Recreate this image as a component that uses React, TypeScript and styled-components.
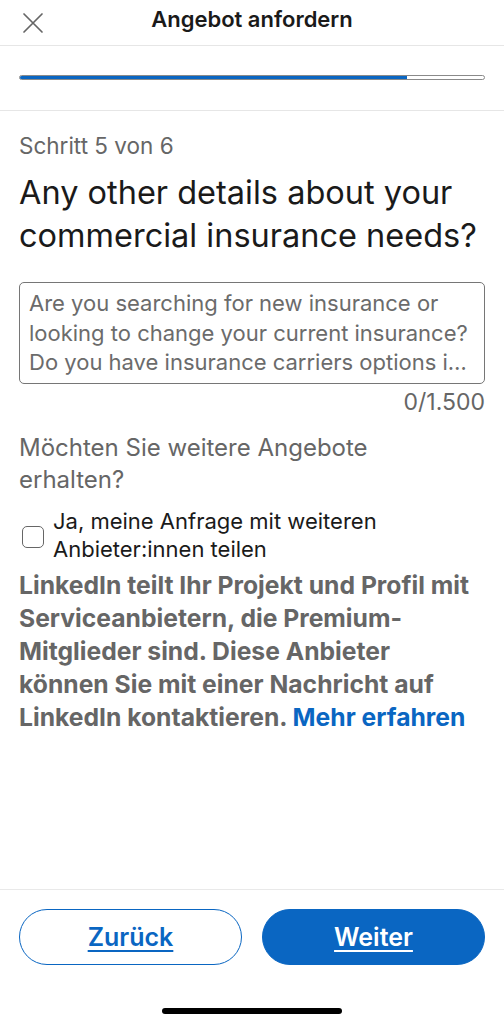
import React from "react";
import styled, { createGlobalStyle } from "styled-components";

const GlobalStyle = createGlobalStyle`
  html, body { margin: 0; padding: 0; background: #fff; }
  body { font-family: Inter, "Noto Sans", "Liberation Sans", sans-serif; -webkit-font-smoothing: antialiased; }
  * { box-sizing: border-box; }
`;

const Screen = styled.div`
  width: 504px;
  height: 1024px;
  display: flex;
  flex-direction: column;
  background: #fff;
`;

const Header = styled.header`
  height: 46px;
  display: grid;
  grid-template-columns: 64px 1fr 64px;
  align-items: center;
  border-bottom: 1px solid #e6e6e6;
`;

const CloseButton = styled.button`
  border: 0;
  background: none;
  padding: 0 0 0 22px;
  height: 100%;
  display: flex;
  align-items: center;
  color: #666;
`;

const Title = styled.h1`
  margin: 0;
  text-align: center;
  font-size: 22px;
  font-weight: 600;
  color: #1a1a1a;
  line-height: 36px;
  padding-bottom: 7px;
`;

const ProgressArea = styled.div`
  height: 65px;
  display: flex;
  align-items: center;
  padding: 0 19px 2px;
  border-bottom: 1px solid #e6e6e6;
`;

const Track = styled.div`
  flex: 1;
  height: 5px;
  border-radius: 3px;
  border: 1px solid #8a8a8a;
  background: #fff;
  overflow: hidden;
  display: flex;
`;

const Fill = styled.div`
  background: #0a66c2;
  height: 100%;
`;

const Content = styled.main`
  flex: 1;
  padding: 21px 19px 0;
  display: flex;
  flex-direction: column;
`;

const Step = styled.div`
  font-size: 22.5px;
  line-height: 28px;
  color: #666;
`;

const Heading = styled.h2`
  margin: 11px 0 0;
  font-size: 32.5px;
  line-height: 43px;
  font-weight: 400;
  color: #1a1a1a;
`;

const TextBox = styled.div`
  margin-top: 25px;
  border: 1px solid #767676;
  border-radius: 5px;
  padding: 6px 9px 6px 9px;
  height: 102px;
  font-size: 22px;
  line-height: 29.5px;
  color: #6b6b6b;
  overflow: hidden;
`;

const Line = styled.div`
  white-space: nowrap;
  overflow: hidden;
  text-overflow: ellipsis;
`;

const Counter = styled.div`
  margin-top: 6px;
  text-align: right;
  font-size: 23px;
  line-height: 24px;
  color: #666;
`;

const Question = styled.div`
  margin-top: 18px;
  font-size: 24px;
  line-height: 32px;
  color: #666;
`;

const CheckRow = styled.label`
  margin-top: 11px;
  display: flex;
  align-items: center;
  gap: 9px;
`;

const Box = styled.span`
  flex: none;
  margin-left: 3px;
  width: 22px;
  height: 22px;
  border: 1.5px solid #666;
  border-radius: 5px;
  margin-top: 4px;
`;

const CheckLabel = styled.span`
  font-size: 22px;
  line-height: 28px;
  color: #1a1a1a;
`;

const Notice = styled.p`
  margin: 6px 0 0;
  font-size: 24.7px;
  line-height: 33px;
  font-weight: 700;
  color: #666;
`;

const Link = styled.a`
  color: #0a66c2;
  text-decoration: none;
`;

const Footer = styled.footer`
  border-top: 1px solid #e9e9e9;
  padding: 19px 19px 0;
  height: 135px;
  display: flex;
  flex-direction: column;
  align-items: center;
`;

const Buttons = styled.div`
  width: 100%;
  display: grid;
  grid-template-columns: 1fr 1fr;
  gap: 20px;
`;

const Pill = styled.button<{ $primary?: boolean }>`
  height: 56px;
  border-radius: 28px;
  border: 1px solid #0a66c2;
  background: ${(p) => (p.$primary ? "#0a66c2" : "#fff")};
  color: ${(p) => (p.$primary ? "#fff" : "#0a66c2")};
  font-family: inherit;
  font-size: 25px;
  font-weight: 600;
  text-decoration: underline;
  text-underline-offset: 4px;
  text-decoration-thickness: 2px;
`;

const HomeBar = styled.div`
  margin-top: 43px;
  width: 180px;
  height: 6px;
  border-radius: 3px;
  background: #000;
`;

export default function App() {
  return (
    <>
      <GlobalStyle />
      <Screen>
        <Header>
          <CloseButton aria-label="Schließen">
            <svg width="22" height="22" viewBox="0 0 22 22" fill="none" stroke="currentColor" strokeWidth="1.7" strokeLinecap="round">
              <path d="M2 2 L20 20 M20 2 L2 20" />
            </svg>
          </CloseButton>
          <Title>Angebot anfordern</Title>
          <span />
        </Header>
        <ProgressArea>
          <Track>
            <Fill style={{ width: `${(5 / 6) * 100}%` }} />
          </Track>
        </ProgressArea>
        <Content>
          <Step>Schritt 5 von 6</Step>
          <Heading>
            Any other details about your
            <br />
            commercial insurance needs?
          </Heading>
          <TextBox>
            <Line>Are you searching for new insurance or</Line>
            <Line>looking to change your current insurance?</Line>
            <Line>Do you have insurance carriers options in mind?</Line>
          </TextBox>
          <Counter>0/1.500</Counter>
          <Question>
            Möchten Sie weitere Angebote
            <br />
            erhalten?
          </Question>
          <CheckRow>
            <Box />
            <CheckLabel>
              Ja, meine Anfrage mit weiteren
              <br />
              Anbieter:innen teilen
            </CheckLabel>
          </CheckRow>
          <Notice>
            LinkedIn teilt Ihr Projekt und Profil mit Serviceanbietern, die Premium-Mitglieder sind. Diese Anbieter
            können Sie mit einer Nachricht auf LinkedIn kontaktieren. <Link href="#">Mehr erfahren</Link>
          </Notice>
        </Content>
        <Footer>
          <Buttons>
            <Pill>Zurück</Pill>
            <Pill $primary>Weiter</Pill>
          </Buttons>
          <HomeBar />
        </Footer>
      </Screen>
    </>
  );
}
